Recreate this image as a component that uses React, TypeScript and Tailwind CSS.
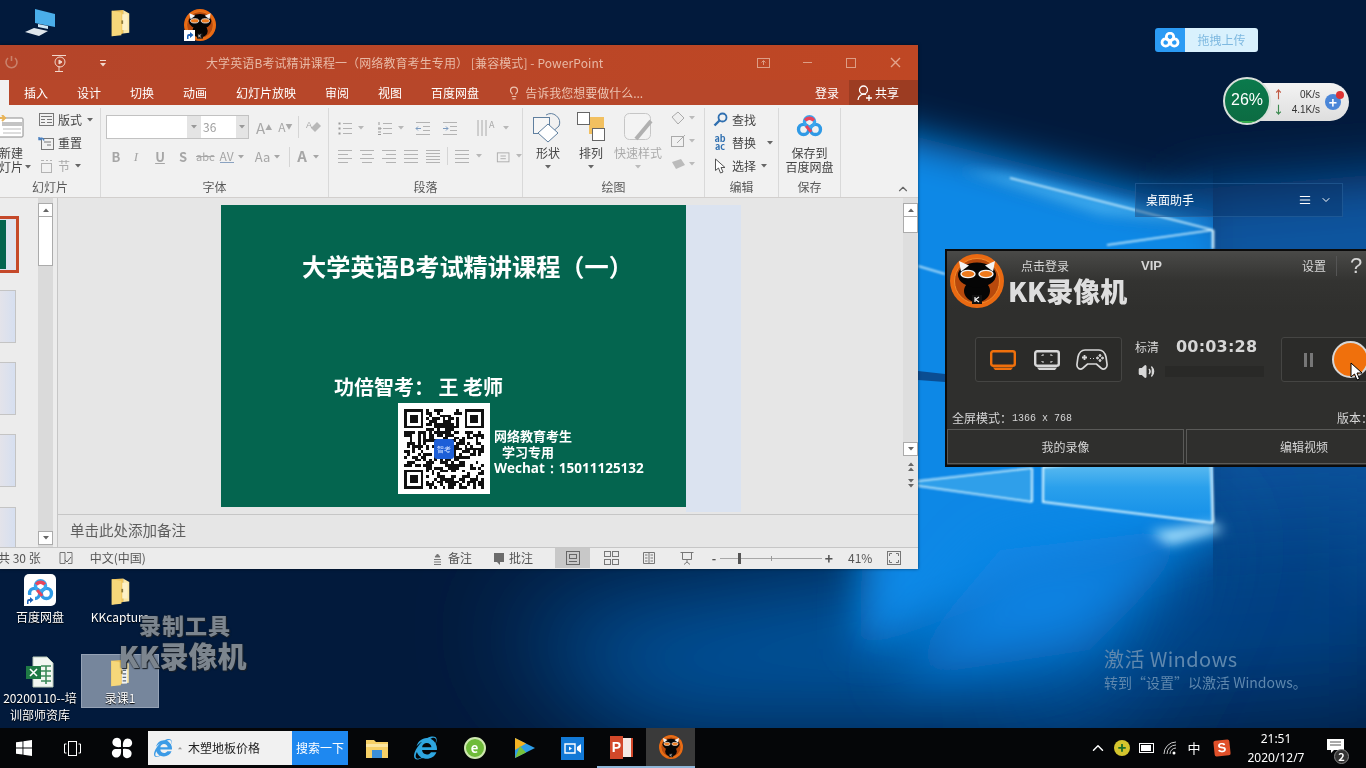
import { ReactNode } from "react";
import { FaInternetExplorer } from "react-icons/fa";
import { LuChevronDown, LuChevronUp, LuLightbulb, LuMenu, LuVolume2 } from "react-icons/lu";

function Wallpaper() {
  return (
    <svg className="absolute inset-0" width="1366" height="768" viewBox="0 0 1366 768">
      <defs>
        <filter id="b60" x="-50%" y="-50%" width="200%" height="200%"><feGaussianBlur stdDeviation="55" /></filter>
        <filter id="b30" x="-50%" y="-50%" width="200%" height="200%"><feGaussianBlur stdDeviation="28" /></filter>
        <filter id="b20" x="-50%" y="-50%" width="200%" height="200%"><feGaussianBlur stdDeviation="20" /></filter>
        <filter id="b8" x="-50%" y="-50%" width="200%" height="200%"><feGaussianBlur stdDeviation="6" /></filter>
        <filter id="b1" x="-50%" y="-50%" width="200%" height="200%"><feGaussianBlur stdDeviation="0.8" /></filter>
        <clipPath id="logoClip"><rect x="0" y="0" width="1213" height="768" /></clipPath>
        <linearGradient id="pane" x1="0" y1="0" x2="0" y2="1">
          <stop offset="0" stopColor="#74c8f2" />
          <stop offset="0.5" stopColor="#2aa0ec" />
          <stop offset="1" stopColor="#128ee8" />
        </linearGradient>
      </defs>
      <rect width="1366" height="768" fill="#021a3c" />
      <polygon points="1180,190 1430,170 1430,600 1180,620" fill="#07549f" filter="url(#b30)" />
      <polygon points="1100,520 1420,500 1420,700 1000,730" fill="#043f82" filter="url(#b60)" />
      <polygon points="500,620 1000,540 1213,520 1100,730 640,730" fill="#06559f" filter="url(#b60)" />
      <g clipPath="url(#logoClip)">
        <polygon points="870,125 1230,215 1230,528 1000,600 860,650" fill="#0a88e6" filter="url(#b20)" />
        <polygon points="1213,525 1000,550 890,680 1090,650" fill="#0a82e2" filter="url(#b30)" />
        <polygon points="1214,225 1010,175 960,170 1100,215" fill="#3ba8ee" filter="url(#b8)" />
      </g>
      <polygon points="1043,467 1210,452 1212,523 1043,502" fill="url(#pane)" />
      <polygon points="918,481 1031,468 1032,502 918,486" fill="#2f9fea" />
      <polygon points="1212,523 1150,532 1170,545 1225,530" fill="#9fdcfb" filter="url(#b8)" />
      <g stroke="#d8f4ff" fill="none" filter="url(#b1)">
        <path d="M1213 230V249M1211 452L1213 523" strokeWidth="2.5" />
        <path d="M1043 467L1211 452M1043 502L1213 523M1043 467V503M1032 468V502" strokeWidth="2" />
        <path d="M918 481L1032 468M918 486L1032 502" strokeWidth="1.6" />
        <path d="M1213 230L1107 245M1213 230L1010 178" strokeWidth="1.4" />
        <path d="M918 266L945 274" strokeWidth="1.5" />
      </g>
      <polygon points="918,371 945,374 945,382 918,380" fill="#0a4d92" />
    </svg>
  );
}

function KKLogo({ className }: { className: string }) {
  return (
    <svg className={className} viewBox="0 0 54 54">
      <circle cx="27" cy="27" r="27" fill="#ea6a12" />
      <circle cx="27" cy="27" r="22.5" fill="#b8490c" stroke="#f08a2c" strokeWidth="1" />
      <ellipse cx="27" cy="37" rx="13" ry="11" fill="#050505" />
      <ellipse cx="27" cy="21" rx="19" ry="12.5" fill="#050505" />
      <path d="M9 7L19 11.5L11 17.5Z" fill="#f4f4f4" />
      <path d="M45 7L35 11.5L43 17.5Z" fill="#f4f4f4" />
      <ellipse cx="18" cy="20" rx="7" ry="3.6" fill="#ef7a1c" stroke="#f4f4f4" strokeWidth="1.4" />
      <ellipse cx="36" cy="20" rx="7" ry="3.6" fill="#ef7a1c" stroke="#f4f4f4" strokeWidth="1.4" />
      <rect x="22" y="41" width="10" height="9" fill="#111" />
      <path d="M25 43V48M29 43L25.5 45.5L29 48" stroke="#f4f4f4" strokeWidth="1.2" fill="none" />
    </svg>
  );
}

function BaiduRings({ className }: { className: string }) {
  return (
    <svg className={className} viewBox="0 0 32 26" fill="none">
      <circle cx="9" cy="17" r="6" stroke="#2f9ae6" strokeWidth="4" />
      <circle cx="23" cy="17" r="6" stroke="#2f9ae6" strokeWidth="4" />
      <circle cx="16" cy="8" r="6" stroke="#3aa6ee" strokeWidth="4" />
      <path d="M11 6.5A6 6 0 0 1 21 6.5" stroke="#e8455c" strokeWidth="4" />
      <path d="M12 13L18 20" stroke="#e8455c" strokeWidth="3.5" />
    </svg>
  );
}

function FolderIcon({ className, stripe }: { className: string; stripe?: boolean }) {
  return (
    <svg className={className} viewBox="0 0 24 32">
      <path d="M2 2L15 1V28L2 31Z" fill="#f0c55c" />
      <path d="M15 1L22 5V27L15 28Z" fill="#fbe7a6" />
      <path d="M2 2L13 4V30L2 31Z" fill="#f6d77a" />
      <rect x="14" y="6" width="6" height={stripe ? 22 : 18} fill={stripe ? "#eef2f6" : "#fdf1c7"} />
      {stripe && <path d="M15 9H19M15 13H19M15 17H19M15 21H19M15 25H19" stroke="#5c6a78" strokeWidth="1.5" />}
      <rect x="13" y="13" width="2" height="4" fill="#8c7a3c" />
    </svg>
  );
}

function Caret({ className = "" }: { className?: string }) {
  return (
    <svg className={`shrink-0 ${className}`} width="6" height="4" viewBox="0 0 6 4">
      <path d="M0 0H6L3 3.5Z" fill="currentColor" />
    </svg>
  );
}

const qrCells: string = (() => {
  let d = "";
  let seed = 7;
  const inFinder = (x: number, y: number) => (x < 8 && y < 8) || (x > 20 && y < 8) || (x < 8 && y > 20);
  for (let y = 0; y < 29; y++) {
    for (let x = 0; x < 29; x++) {
      seed = (seed * 1103515245 + 12345) & 0x7fffffff;
      if (!inFinder(x, y) && (seed >> 16) % 100 < 52) d += `M${x} ${y}h1v1h-1z`;
    }
  }
  return d;
})();

function Finder({ x, y }: { x: number; y: number }) {
  return (
    <g>
      <rect x={x + 0.5} y={y + 0.5} width="6" height="6" fill="none" stroke="#111" />
      <rect x={x + 2} y={y + 2} width="3" height="3" fill="#111" />
    </g>
  );
}

// 段落 group icon: four text lines, optionally with bullets
function LinesIcon({ kind }: { kind: "left" | "center" | "right" | "full" | "dist" | "bullet" | "num" | "out" | "in" }) {
  const rows = kind === "dist" ? [2, 5, 8, 11, 14] : kind === "bullet" || kind === "num" ? [3, 8, 13] : [2, 6, 10, 14];
  const span = (i: number): [number, number] => {
    if (kind === "bullet" || kind === "num") return [6, 15];
    if (kind === "out" || kind === "in") return i === 0 || i === 3 ? [1, 15] : [8, 15];
    const short = i % 2 === 1;
    if (kind === "center") return short ? [3, 13] : [1, 15];
    if (kind === "right") return short ? [5, 15] : [1, 15];
    if (kind === "left") return short ? [1, 11] : [1, 15];
    return [1, 15];
  };
  return (
    <svg className="shrink-0" width="16" height="16" viewBox="0 0 16 16" stroke="#b3b3b3" fill="none">
      {rows.map((y, i) => (
        <path key={y} d={`M${span(i)[0]} ${y + 0.5}H${span(i)[1]}`} />
      ))}
      {kind === "bullet" && <path d="M1.5 3.5h2M1.5 8.5h2M1.5 13.5h2" strokeWidth="2" stroke="#999" />}
      {kind === "num" && <path d="M2 2v3M1 8h3v1H1M1 12h3M1 14.5h3" stroke="#999" />}
      {kind === "out" && <path d="M6 8.5H1M3 6.5L1 8.5L3 10.5" stroke="#7d9cc0" />}
      {kind === "in" && <path d="M1 8.5H6M4 6.5L6 8.5L4 10.5" stroke="#7d9cc0" />}
    </svg>
  );
}

function RibbonGroup({ className, label, children }: { className: string; label: string; children: ReactNode }) {
  return (
    <div className={`flex flex-col shrink-0 h-[89px] border-r border-[#d9d9d9] ${className}`}>
      <div className="flex-1 min-h-0">{children}</div>
      <div className="h-[20px] leading-[20px] text-center text-[12px] text-[#5a5a5a]">{label}</div>
    </div>
  );
}

function SideIconRow({ icon, text, dim, caret }: { icon: ReactNode; text: string; dim?: boolean; caret?: boolean }) {
  return (
    <div className={`flex items-center h-[23px] gap-[4px] text-[12px] ${dim ? "text-[#a8a8a8]" : "text-[#444]"}`}>
      <span className="w-[16px] h-[16px] flex items-center justify-center shrink-0">{icon}</span>
      <span>{text}</span>
      {caret && <Caret className="text-[#666] ml-[1px]" />}
    </div>
  );
}

function ScrollBtn({ up, className = "" }: { up?: boolean; className?: string }) {
  return (
    <div className={`w-[15px] h-[14px] bg-white border border-[#ababab] flex items-center justify-center text-[#666] shrink-0 ${className}`}>
      <Caret className={up ? "rotate-180" : ""} />
    </div>
  );
}

function Ribbon() {
  const fmt = "w-[16px] text-center text-[13px] font-bold text-[#a6a6a6]";
  return (
    <div className="flex h-[93px] bg-[#f1f1f1] border-b border-[#d2cfcd] pt-[3px] relative">
      <RibbonGroup className="w-[101px] overflow-hidden" label="幻灯片">
        <div className="flex">
          <div className="w-[34px] shrink-0 pt-[7px] flex flex-col text-[12px] leading-[14px] text-[#444]">
            <svg className="mb-[8px]" width="24" height="23" viewBox="0 0 24 23">
              <rect x="-2" y="3" width="25" height="19" rx="1" fill="#fff" stroke="#8c8c8c" />
              <rect x="2" y="7" width="20" height="4" fill="#c4c4c4" />
              <path d="M3 14H21M3 18H21" stroke="#bbb" />
              <path d="M2 0L5 3L2 6M0 3H6" stroke="#e8b45a" strokeWidth="2" fill="none" />
            </svg>
            <span className="-ml-[1px]">新建</span>
            <span className="flex items-center gap-[2px] -ml-[1px] whitespace-nowrap">灯片<Caret className="text-[#666]" /></span>
          </div>
          <div className="pl-[4px] flex flex-col">
            <SideIconRow caret text="版式" icon={<svg width="15" height="13" viewBox="0 0 15 13" fill="none" stroke="#777"><rect x=".5" y=".5" width="14" height="12" /><path d="M2 3.5H13M2 6.5H6M2 9.5H6M8 6.5H13M8 9.5H13" /></svg>} />
            <SideIconRow text="重置" icon={<svg width="16" height="14" viewBox="0 0 16 14" fill="none" stroke="#777"><rect x="3.5" y="2.5" width="12" height="11" /><path d="M6 6H13M9 9H13" /><path d="M6 4.5A3 3 0 0 0 1 3M1 1V3.5H3.5" stroke="#4a80c0" strokeWidth="1.4" /></svg>} />
            <SideIconRow dim caret text="节" icon={<svg width="13" height="14" viewBox="0 0 13 14" fill="none" stroke="#b3b3b3"><rect x="1.5" y="4.5" width="10" height="9" /><path d="M1 1.5H4M6 1.5H8M10 1.5H12" /></svg>} />
          </div>
        </div>
      </RibbonGroup>

      <RibbonGroup className="w-[228px]" label="字体">
        <div className="flex items-center pl-[5px] pt-[7px]">
          <div className="flex h-[24px] border border-[#c2c2c2] bg-white">
            <div className="w-[80px]" />
            <div className="w-[14px] bg-[#e4e4e4] flex items-center justify-center text-[#999]"><Caret /></div>
            <div className="w-[35px] pl-[2px] text-[12px] leading-[22px] text-[#a0a0a0]">36</div>
            <div className="w-[12px] bg-[#e4e4e4] flex items-center justify-center text-[#999]"><Caret /></div>
          </div>
          <span className="ml-[7px] text-[15px] leading-none text-[#a9a9a9]">A<sup className="text-[7px]">▲</sup></span>
          <span className="ml-[6px] text-[12px] leading-none text-[#a9a9a9]">A<sup className="text-[7px]">▼</sup></span>
          <div className="ml-[6px] w-px h-[22px] bg-[#d5d5d5]" />
          <svg className="ml-[7px]" width="16" height="16" viewBox="0 0 16 16"><path d="M9 13L15 7L11 3L5 9Z" fill="#b8b8b8" /><text x="0" y="9" fontSize="9" fill="#a9a9a9" fontFamily="Liberation Sans">A</text></svg>
        </div>
        <div className="flex items-center pl-[7px] pt-[5px] h-[30px] text-[#a6a6a6]">
          <span className={fmt}>B</span>
          <span className={`${fmt} ml-[4px] italic font-normal font-['Liberation_Serif',serif]`}>I</span>
          <span className={`${fmt} ml-[8px] underline`}>U</span>
          <span className={`${fmt} ml-[7px]`}>S</span>
          <span className="ml-[5px] text-[11px] line-through">abc</span>
          <span className="ml-[5px] text-[12px] leading-[12px] border-b border-[#8aa2c0]">AV</span>
          <Caret className="ml-[4px]" />
          <span className="ml-[11px] text-[13px]">Aa</span>
          <Caret className="ml-[4px]" />
          <div className="ml-[9px] w-px h-[20px] bg-[#d5d5d5]" />
          <span className="ml-[7px] text-[15px] font-bold">A</span>
          <Caret className="ml-[6px]" />
        </div>
      </RibbonGroup>

      <RibbonGroup className="w-[194px]" label="段落">
        <div className="flex items-center pl-[8px] pt-[11px] gap-[5px] text-[#b8b8b8]">
          <LinesIcon kind="bullet" /><Caret />
          <span className="w-[3px]" />
          <LinesIcon kind="num" /><Caret />
          <span className="w-[1px]" />
          <LinesIcon kind="out" /><span className="w-[1px]" /><LinesIcon kind="in" />
          <span className="w-[8px]" />
          <svg width="22" height="18" viewBox="0 0 22 18" fill="none" stroke="#aaa"><path d="M2 1V17M6 1V17M10 1V17" /><text x="13" y="9" fontSize="9" fill="#aaa" stroke="none">A</text></svg>
          <Caret />
        </div>
        <div className="flex items-center pl-[8px] pt-[10px] gap-[6px] text-[#b8b8b8]">
          <LinesIcon kind="left" /><LinesIcon kind="center" /><LinesIcon kind="right" /><LinesIcon kind="full" /><LinesIcon kind="dist" />
          <span className="w-[1px] h-[18px] bg-[#d5d5d5]" />
          <LinesIcon kind="full" /><Caret />
          <span className="w-[2px]" />
          <svg width="16" height="16" viewBox="0 0 16 16" fill="none" stroke="#aaa"><rect x="1.5" y="4.5" width="13" height="10" /><path d="M5 8H11M5 11H11" /></svg>
          <Caret />
        </div>
      </RibbonGroup>

      <RibbonGroup className="w-[182px]" label="绘图">
        <div className="flex text-[12px] text-[#444] pt-[4px]">
          <div className="w-[50px] flex flex-col items-center">
            <svg width="32" height="31" viewBox="0 0 32 31" fill="none" stroke="#5f7f9f">
              <path d="M14 3A9 9 0 0 1 27 14L18 22" />
              <rect x="1.5" y="5.5" width="16" height="16" fill="#f6f6f6" />
              <path d="M16 12L26 21L16 30L6 21Z" fill="#fff" />
            </svg>
            <span className="leading-[14px] mt-[3px]">形状</span>
            <Caret className="text-[#666] mt-[5px]" />
          </div>
          <div className="w-[40px] -ml-[2px] flex flex-col items-center">
            <svg width="28" height="31" viewBox="0 0 28 31">
              <rect x="12" y="5" width="15" height="17" fill="#f2c060" />
              <rect x=".5" y=".5" width="12" height="12" fill="#fff" stroke="#666" />
              <rect x="15.5" y="16.5" width="12" height="12" fill="#fff" stroke="#666" />
            </svg>
            <span className="leading-[14px] mt-[3px]">排列</span>
            <Caret className="text-[#666] mt-[5px]" />
          </div>
          <div className="w-[54px] flex flex-col items-center text-[#aaa] whitespace-nowrap">
            <svg width="30" height="31" viewBox="0 0 30 31" fill="none">
              <rect x="1.5" y="1.5" width="26" height="26" rx="5" fill="#f3f3f3" stroke="#c6c6c6" />
              <path d="M28 9L13 27" stroke="#b0b0b0" strokeWidth="4" />
            </svg>
            <span className="leading-[14px] mt-[3px]">快速样式</span>
            <Caret className="text-[#bbb] mt-[5px]" />
          </div>
          <div className="flex flex-col ml-[6px] gap-[6px] text-[#bbb] -mt-[3px]">
            <span className="flex items-center gap-[3px] h-[17px]"><svg width="15" height="14" viewBox="0 0 15 14"><path d="M1 6L7 1L13 7L7 13Z" fill="#eee" stroke="#aaa" /></svg><Caret /></span>
            <span className="flex items-center gap-[3px] h-[17px]"><svg width="15" height="14" viewBox="0 0 15 14" fill="none" stroke="#aaa"><rect x=".5" y="2.5" width="12" height="10" /><path d="M6 9L14 1" /></svg><Caret /></span>
            <span className="flex items-center gap-[3px] h-[17px]"><svg width="15" height="14" viewBox="0 0 15 14"><path d="M1 5L10 2L14 8L5 12Z" fill="#bbb" /></svg><Caret /></span>
          </div>
        </div>
      </RibbonGroup>

      <RibbonGroup className="w-[74px] overflow-hidden" label="编辑">
        <div className="flex flex-col pl-[7px]">
          <SideIconRow text="查找" icon={<svg width="15" height="15" viewBox="0 0 15 15" fill="none" stroke="#2f6fb0" strokeWidth="1.8"><circle cx="9.5" cy="5.5" r="4" /><path d="M6.5 8.5L1.5 13.5" strokeWidth="2.4" /></svg>} />
          <div className="flex items-center">
            <SideIconRow text="替换" icon={<span className="text-[9px] leading-[8px] text-[#2f6fb0] font-bold text-center">ab<br />ac</span>} />
            <Caret className="ml-[11px] text-[#666]" />
          </div>
          <SideIconRow caret text="选择" icon={<svg width="12" height="16" viewBox="0 0 12 16" fill="#fff" stroke="#555"><path d="M1.5 1V12.5L4.5 10L6.5 15L9 14L7 9.5H11Z" /></svg>} />
        </div>
      </RibbonGroup>

      <RibbonGroup className="w-[62px]" label="保存">
        <div className="flex flex-col items-center pt-[7px] text-[12px] leading-[14px] text-[#444] whitespace-nowrap">
          <BaiduRings className="w-[27px] h-[22px] mb-[9px]" />
          <span>保存到</span>
          <span>百度网盘</span>
        </div>
      </RibbonGroup>

      <LuChevronUp className="absolute right-[8px] bottom-[1px] w-[14px] h-[14px] text-[#666]" />
    </div>
  );
}

function SlideCanvas() {
  return (
    <div className="w-[465px] h-[302px] bg-[#04654f] flex flex-col text-white font-bold shrink-0">
      <div className="mt-[43px] ml-[81px] h-[36px] leading-[36px] text-[24.2px] whitespace-nowrap">大学英语B考试精讲课程（一）</div>
      <div className="mt-[90px] ml-[113px] h-[26px] leading-[26px] text-[20px] whitespace-nowrap">功倍智考： 王 老师</div>
      <div className="flex mt-[3px] ml-[177px]">
        <div className="w-[92px] h-[91px] bg-white flex items-center justify-center relative">
          <svg width="80" height="80" viewBox="0 0 29 29" shapeRendering="crispEdges">
            <path d={qrCells} fill="#111" />
            <Finder x={0} y={0} />
            <Finder x={22} y={0} />
            <Finder x={0} y={22} />
          </svg>
          <div className="absolute w-[20px] h-[20px] rounded-[3px] bg-[#1d5fd8] text-[7px] leading-[20px] text-center text-[#cfe0ff] font-normal whitespace-nowrap">智考</div>
        </div>
        <div className="ml-[4px] pt-[25px] flex flex-col text-[13px] leading-[16px] whitespace-nowrap">
          <span>网络教育考生</span>
          <span className="ml-[8px]">学习专用</span>
          <span className="font-['Open_Sans',sans-serif] text-[13.5px]">Wechat：15011125132</span>
        </div>
      </div>
    </div>
  );
}

function MainArea() {
  const thumb = "w-[16px] h-[53px] shrink-0 border border-[#c4c4c4] border-l-0 bg-gradient-to-r from-[#e3e3ea] to-[#d6dff0]";
  return (
    <div className="flex flex-1 min-h-0 bg-[#e6e6e6]">
      <div className="w-[58px] shrink-0 flex border-r border-[#c6c6c6] bg-[#ececec]">
        <div className="w-[38px] shrink-0 h-[349px] overflow-hidden flex flex-col pt-[18px]">
          <div className="w-[19px] h-[57px] shrink-0 border-[3px] border-l-0 border-[#c5492a] bg-[#dfe3ee] flex">
            <div className="w-[6px] my-[1px] bg-[#04654f]" />
          </div>
          <div className={`${thumb} mt-[17px]`} />
          <div className={`${thumb} mt-[19px]`} />
          <div className={`${thumb} mt-[19px]`} />
          <div className={`${thumb} mt-[20px]`} />
        </div>
        <div className="w-[15px] shrink-0 flex flex-col pt-[5px] pb-[2px] bg-[#dadada]">
          <ScrollBtn up />
          <div className="h-[49px] bg-white border border-t-0 border-[#ababab] shrink-0" />
          <div className="flex-1" />
          <ScrollBtn />
        </div>
      </div>
      <div className="flex-1 flex flex-col min-w-0">
        <div className="h-[316px] flex shrink-0">
          <div className="ml-[163px] mt-[7px] flex items-start">
            <SlideCanvas />
            <div className="w-[55px] h-[307px] bg-[#dbe3f0]" />
          </div>
          <div className="ml-auto w-[15px] flex flex-col pt-[5px] text-[#666] shrink-0 bg-[#dedede]">
            <ScrollBtn up />
            <div className="h-[16px] bg-white border border-t-0 border-[#ababab] shrink-0" />
            <div className="flex-1" />
            <ScrollBtn />
            <div className="h-[58px] bg-[#e6e6e6] flex flex-col items-center pt-[6px] shrink-0">
              <Caret className="rotate-180" /><Caret className="rotate-180 mt-[1px]" />
              <div className="h-[8px]" />
              <Caret /><Caret className="mt-[1px]" />
            </div>
          </div>
        </div>
        <div className="h-[33px] border-t border-[#c6c6c6] pl-[12px] text-[14.5px] leading-[30px] text-[#5e5e5e]">单击此处添加备注</div>
      </div>
    </div>
  );
}

function StatusBar() {
  const view = "h-full flex items-center justify-center shrink-0";
  return (
    <div className="h-[22px] flex items-center bg-[#ececec] border-t border-[#c6c6c6] text-[12px] text-[#555] shrink-0 pb-px">
      <span className="-ml-[2px] whitespace-nowrap">共 30 张</span>
      <svg className="ml-[18px]" width="14" height="14" viewBox="0 0 14 14" fill="none" stroke="#777"><path d="M1 1.5H6V12.5H1ZM8 1.5H13V12.5H9" /><path d="M6 9L8 11L12 6" stroke="#5a5a5a" /></svg>
      <span className="ml-[17px] whitespace-nowrap">中文(中国)</span>
      <div className="ml-auto flex items-center h-full">
        <div className="w-[41px] flex items-center gap-[6px]"><svg width="9" height="13" viewBox="0 0 9 13" fill="none" stroke="#777"><path d="M1 7.5H8M1 10H8M1 12.5H8" /><path d="M2 5L4.5 2L7 5Z" fill="#777" /></svg>备注</div>
        <div className="w-[41px] ml-[20px] flex items-center gap-[5px]"><svg width="10" height="13" viewBox="0 0 10 13"><path d="M0 1H10V10H6V13L3 10H0Z" fill="#6b6b6b" /></svg>批注</div>
        <div className={`${view} w-[35px] ml-[20px] bg-[#c8c8c8]`}><svg width="14" height="14" viewBox="0 0 14 14" fill="none" stroke="#666"><rect x=".5" y=".5" width="13" height="13" /><rect x="3.5" y="3.5" width="7" height="4" /><path d="M3 10.5H11" /></svg></div>
        <div className={`${view} w-[42px]`}><svg width="15" height="14" viewBox="0 0 15 14" fill="none" stroke="#777"><rect x=".5" y=".5" width="6" height="5" /><rect x="8.5" y=".5" width="6" height="5" /><rect x=".5" y="8.5" width="6" height="5" /><rect x="8.5" y="8.5" width="6" height="5" /></svg></div>
        <div className={`${view} w-[34px]`}><svg width="14" height="14" viewBox="0 0 14 14" fill="none" stroke="#777"><path d="M7 1.5H1.5V12.5H7V1.5H12.5V12.5H7M3 4H5.5M3 7H5.5M3 10H5.5M8.5 4H11M8.5 7H11M8.5 10H11" /></svg></div>
        <div className={`${view} w-[42px]`}><svg width="14" height="14" viewBox="0 0 14 14" fill="none" stroke="#777"><path d="M.5 1.5H13.5M2.5 1.5V8.5H11.5V1.5M7 8.5V11M4 13.5L7 11L10 13.5" /></svg></div>
        <div className={`${view} w-[12px] font-bold`}>-</div>
        <div className="w-[102px] h-full flex items-center relative shrink-0">
          <div className="w-full h-px bg-[#a8a8a8]" />
          <div className="absolute left-[18px] w-[3px] h-[11px] bg-[#555]" />
          <div className="absolute left-[51px] w-px h-[5px] bg-[#999]" />
        </div>
        <div className={`${view} w-[14px] font-bold text-[14px]`}>+</div>
        <div className="ml-[12px] w-[25px] shrink-0">41%</div>
        <div className={`${view} w-[16px] ml-[13px] mr-[16px]`}><svg width="14" height="14" viewBox="0 0 14 14" fill="none" stroke="#777"><rect x=".5" y=".5" width="13" height="13" /><path d="M2.5 5V2.5H5M9 2.5H11.5V5M11.5 9V11.5H9M5 11.5H2.5V9" /></svg></div>
      </div>
    </div>
  );
}

function PowerPointWindow() {
  const winIcon = "w-[44px] flex items-center justify-center shrink-0";
  return (
    <div className="absolute left-0 top-[45px] w-[918px] h-[524px] flex flex-col shadow-[0_0_3px_rgba(0,0,0,.5)]">
      <div className="h-[35px] flex items-center shrink-0 bg-gradient-to-r from-[#b4452a] to-[#bf4724] text-[12px] tracking-[0.1px] text-[#e8b9a6]">
        <svg className="ml-[4px]" width="15" height="15" viewBox="0 0 15 15" fill="none" stroke="#c9826c" strokeWidth="1.6"><path d="M4 3A5.5 5.5 0 1 0 11 3M7.5 1V6" /></svg>
        <svg className="ml-[32px]" width="16" height="20" viewBox="0 0 16 20" fill="none" stroke="#f2d8cc"><path d="M1 2.5H15M8 13V18M4 18.5H12" /><circle cx="9" cy="9" r="5" /><path d="M8 7V11L11 9Z" fill="#f2d8cc" /></svg>
        <svg className="ml-[32px]" width="8" height="8" viewBox="0 0 8 8" fill="#f2d8cc"><path d="M1 1H7V2H1ZM1 4H7L4 7.5Z" /></svg>
        <span className="ml-[99px] whitespace-nowrap">大学英语B考试精讲课程一（网络教育考生专用） [兼容模式] - PowerPoint</span>
        <div className="ml-auto flex h-full">
          <div className={winIcon}><svg width="13" height="10" viewBox="0 0 13 10" fill="none" stroke="#dd9e86"><rect x=".5" y=".5" width="12" height="9" /><path d="M6.5 7V3M4.5 4.5L6.5 2.5L8.5 4.5" /></svg></div>
          <div className={winIcon}><div className="w-[9px] h-px bg-[#dd9e86]" /></div>
          <div className={winIcon}><div className="w-[10px] h-[10px] border border-[#dd9e86]" /></div>
          <div className={`${winIcon} mr-px text-[#e3a48c]`}><svg width="11" height="11" viewBox="0 0 11 11" stroke="currentColor" strokeWidth="1.4"><path d="M1 1L10 10M10 1L1 10" /></svg></div>
        </div>
      </div>
      <div className="h-[25px] flex items-center shrink-0 bg-[#b7472a] text-[12px] text-white">
        <div className="w-[9px] h-full bg-[#f1f1f1] shrink-0" />
        <div className="ml-[15px] flex gap-[29px] whitespace-nowrap">
          <span>插入</span><span>设计</span><span>切换</span><span>动画</span><span>幻灯片放映</span><span>审阅</span><span>视图</span><span>百度网盘</span>
        </div>
        <LuLightbulb className="ml-[28px] w-[14px] h-[14px] text-[#edc4b2]" />
        <span className="ml-[4px] text-[#edc4b2] whitespace-nowrap">告诉我您想要做什么...</span>
        <span className="ml-auto">登录</span>
        <div className="ml-[10px] w-[69px] h-full bg-[#9c3c22] flex items-center pl-[8px] gap-[3px]">
          <svg width="15" height="16" viewBox="0 0 15 16" fill="none" stroke="#fff" strokeWidth="1.3"><circle cx="6.5" cy="5" r="4" /><path d="M1 15A6 6 0 0 1 9 9.5M9 13H15M12 10V16" /></svg>
          共享
        </div>
      </div>
      <Ribbon />
      <MainArea />
      <StatusBar />
    </div>
  );
}

function KKWindow() {
  return (
    <div className="absolute left-[945px] top-[249px] w-[425px] h-[218px] flex flex-col bg-[#2f2f2d] border-2 border-[#0b0b0b] text-[#d6d6d6] text-[12px] overflow-hidden">
      <div className="h-[60px] shrink-0 flex bg-gradient-to-b from-[#4a4a48] via-[#333331] to-[#2f2f2d]">
        <KKLogo className="w-[54px] h-[54px] ml-[3px] mt-[3px] shrink-0" />
        <div className="flex flex-col ml-[4px] flex-1 min-w-0">
          <div className="flex items-center h-[28px] pt-[2px]">
            <span className="ml-[13px] w-[120px] shrink-0">点击登录</span>
            <span className="font-bold text-[13px] font-['Liberation_Sans',sans-serif]">VIP</span>
            <span className="ml-[140px]">设置</span>
            <div className="ml-[10px] w-px h-[20px] bg-[#555]" />
            <span className="ml-[13px] text-[22px] leading-none font-['Liberation_Sans',sans-serif]">?</span>
          </div>
          <div className="-mt-[2px] text-[27px] leading-[28px] font-black text-[#dedede] whitespace-nowrap">KK录像机</div>
        </div>
      </div>
      <div className="flex items-start mt-[26px] ml-[28px] shrink-0">
        <div className="w-[147px] h-[45px] flex items-center border border-[#454543] rounded-[3px] bg-[#2b2b29] shrink-0">
          <svg className="ml-[14px]" width="26" height="20" viewBox="0 0 26 20" fill="none"><rect x="1.2" y="1.2" width="23.6" height="14.6" rx="2" stroke="#f0700c" strokeWidth="2.4" /><path d="M5 20H21L23 17.5H3Z" fill="#f0700c" /></svg>
          <svg className="ml-[18px]" width="26" height="20" viewBox="0 0 26 20" fill="none"><rect x="1.2" y="1.2" width="23.6" height="14.6" rx="2" stroke="#d8d8d8" strokeWidth="2.4" /><path d="M5 20H21L23 17.5H3Z" fill="#d8d8d8" /><path d="M8 6V5H10M16 5H18V6M18 11V12H16M10 12H8V11" stroke="#d8d8d8" /></svg>
          <svg className="ml-[16px]" width="32" height="23" viewBox="0 0 32 23" fill="none" stroke="#d8d8d8">
            <path d="M9 2H23C27 2 29 5 30 9L31 16C31.5 20 28 22.5 25 20L20.5 16H11.5L7 20C4 22.5 .5 20 1 16L2 9C3 5 5 2 9 2Z" strokeWidth="1.7" />
            <path d="M6 9.5H11M8.5 7V12" strokeWidth="1.8" />
            <path d="M14 10.5H15M17 10.5H18" />
            <circle cx="24" cy="7.5" r="1" fill="#d8d8d8" /><circle cx="24" cy="12.5" r="1" fill="#d8d8d8" /><circle cx="21.5" cy="10" r="1" fill="#d8d8d8" /><circle cx="26.5" cy="10" r="1" fill="#d8d8d8" />
          </svg>
        </div>
        <div className="flex flex-col ml-[13px] w-[130px] shrink-0">
          <div className="flex items-center h-[20px]">
            <span>标清</span>
            <span className="ml-[17px] font-bold text-[16px] tracking-[0.2px] font-['DejaVu_Sans',sans-serif] whitespace-nowrap">00:03:28</span>
          </div>
          <div className="flex items-center mt-[6px]">
            <LuVolume2 className="w-[17px] h-[17px] ml-[3px] text-[#d8d8d8] fill-[#d8d8d8]" />
            <div className="ml-[10px] w-[99px] h-[11px] bg-[#292927]" />
          </div>
        </div>
        <div className="w-[120px] h-[45px] ml-[16px] flex items-center border border-[#454543] rounded-[3px] bg-[#2b2b29] shrink-0 relative">
          <div className="ml-[22px] w-[3px] h-[14px] bg-[#777]" />
          <div className="ml-[3px] w-[3px] h-[14px] bg-[#777]" />
          <div className="ml-[19px] w-[37px] h-[37px] rounded-full bg-[#f0700c] border-2 border-[#d6d6d6] shrink-0" />
          <svg className="absolute left-[68px] top-[24px]" width="13" height="19" viewBox="0 0 13 19"><path d="M1 1V15L4.5 12L7 18L9.5 17L7 11H12Z" fill="#fff" stroke="#000" /></svg>
        </div>
      </div>
      <div className="flex items-center mt-[26px] ml-[5px] h-[20px] shrink-0 whitespace-nowrap">
        <span>全屏模式：</span>
        <span className="font-['Liberation_Mono',monospace] text-[10px]">1366 x 768</span>
        <span className="ml-[265px]">版本：</span>
      </div>
      <div className="flex flex-1 mb-[1px] gap-[2px] min-h-0 pt-[1px]">
        <div className="w-[237px] border border-[#5a5a58] flex items-center justify-center shrink-0">我的录像</div>
        <div className="w-[236px] border border-[#5a5a58] flex items-center justify-center shrink-0">编辑视频</div>
      </div>
    </div>
  );
}

function DesktopIcon({ className, icon, label }: { className: string; icon: ReactNode; label: ReactNode }) {
  return (
    <div className={`absolute flex flex-col items-center text-white text-[12px] leading-[17px] text-center [text-shadow:0_1px_1px_#000] ${className}`}>
      {icon}
      <div className="whitespace-nowrap">{label}</div>
    </div>
  );
}

function ShortcutArrow({ className }: { className: string }) {
  return (
    <svg className={`absolute ${className}`} width="11" height="11" viewBox="0 0 11 11">
      <rect width="11" height="11" fill="#fff" />
      <path d="M3 9V6Q3 4 5 4H6V2L9.5 5L6 8V6H5Q4.5 6 4.5 7V9Z" fill="#1c62b8" />
    </svg>
  );
}

function DesktopIcons() {
  return (
    <>
      <DesktopIcon className="left-[10px] top-[8px] w-[60px]" label="此电脑" icon={
        <svg className="h-[28px] mb-[6px]" width="32" height="28" viewBox="0 0 32 28"><path d="M11 1L31 6V19L11 15Z" fill="#4aaeea" /><path d="M14 16V19L24 21V18Z" fill="#cfe6f4" /><path d="M1 24L10 20L24 23L15 28Z" fill="#dfe6ec" /></svg>
      } />
      <DesktopIcon className="left-[90px] top-[9px] w-[60px]" label="我的文档" icon={<div className="mb-[5px] h-[28px] flex"><FolderIcon className="w-[21px] h-[28px]" /></div>} />
      <DesktopIcon className="left-[170px] top-[9px] w-[60px]" label="录像机" icon={
        <div className="relative w-[32px] h-[30px] mb-[3px]"><KKLogo className="w-[32px] h-[32px]" /><ShortcutArrow className="left-0 bottom-[-2px]" /></div>
      } />

      <DesktopIcon className="left-[10px] top-[574px] w-[60px]" label="百度网盘" icon={
        <div className="relative w-[32px] h-[32px] rounded-[5px] bg-white flex items-center justify-center mb-[2px]"><BaiduRings className="w-[27px] h-[24px]" /><ShortcutArrow className="left-0 bottom-0" /></div>
      } />
      <DesktopIcon className="left-[90px] top-[577px] w-[60px]" label="KKcapture" icon={<FolderIcon className="w-[21px] h-[29px] mb-[2px]" />} />
      <DesktopIcon className="left-0 top-[656px] w-[80px]" label={<>20200110--培<br />训部师资库</>} icon={
        <svg className="mb-[1px]" width="28" height="32" viewBox="0 0 28 32">
          <path d="M7 1H21L27 7V31H7Z" fill="#f2f7f2" stroke="#b9c9b9" />
          <path d="M15 10H25M15 15H25M15 20H25M15 25H25M20 10V28" stroke="#3c8a5a" strokeWidth="1.6" />
          <rect x="0" y="10" width="15" height="13" fill="#1f7a45" />
          <path d="M4 13L11 20M11 13L4 20" stroke="#fff" strokeWidth="1.6" />
        </svg>
      } />
      <div className="absolute left-[81px] top-[654px] w-[78px] h-[54px] bg-[#c5cfdc]/60 border border-[#dfe6ee]/30 flex flex-col items-center pt-[4px] text-white text-[12px] leading-[17px] [text-shadow:0_1px_1px_#000]">
        <FolderIcon stripe className="w-[22px] h-[28px] mb-[2px]" />
        <span>录课1</span>
      </div>
      <div className="absolute left-[115px] top-[609px] w-[135px] flex flex-col items-center font-black text-[#7c858e] [text-shadow:0_0_2px_#1b2128,1px_1px_1px_#1b2128] whitespace-nowrap">
        <span className="text-[22px] leading-[30px] tracking-[1px] ml-[5px]">录制工具</span>
        <span className="text-[29px] leading-[32px]">KK录像机</span>
      </div>
    </>
  );
}

function TopWidgets() {
  return (
    <>
      <div className="absolute left-[1155px] top-[28px] w-[103px] h-[24px] flex rounded-[3px] overflow-hidden">
        <div className="w-[30px] bg-[#2b9bf4] flex items-center justify-center">
          <svg width="20" height="16" viewBox="0 0 32 26" fill="none" stroke="#fff" strokeWidth="4.5"><circle cx="9" cy="17" r="6" /><circle cx="23" cy="17" r="6" /><circle cx="16" cy="8" r="6" /></svg>
        </div>
        <div className="flex-1 bg-[#d9f1fd] text-[12px] leading-[24px] text-center text-[#7eb9e0]">拖拽上传</div>
      </div>

      <div className="absolute left-[1246px] top-[83px] w-[103px] h-[38px] rounded-r-[19px] bg-gradient-to-b from-[#f3f3f3] to-[#dedede] flex items-center text-[#333] text-[10px] leading-[15px] pl-[27px]">
        <div className="flex flex-col font-bold text-[11px]"><span className="text-[#c05a44]">↑</span><span className="text-[#3c8a50]">↓</span></div>
        <div className="flex flex-col items-end w-[44px] -ml-[8px] mr-[5px] font-['Liberation_Sans',sans-serif]"><span>0K/s</span><span>4.1K/s</span></div>
        <div className="relative w-[16px] h-[16px] rounded-full bg-[#4a86d8] text-white text-[14px] font-bold leading-[16px] text-center">+
          <div className="absolute -right-[3px] -top-[3px] w-[8px] h-[8px] rounded-full bg-[#dd3333]" />
        </div>
      </div>
      <div className="absolute left-[1223px] top-[77px] w-[48px] h-[48px] rounded-full border-2 border-[#d8e0da] overflow-hidden bg-gradient-to-b from-[#0a7a4c] to-[#0c6b42] flex flex-col">
        <div className="flex-1 text-white text-[16px] leading-[42px] text-center whitespace-nowrap font-['Liberation_Sans',sans-serif]">26%</div>
        <div className="h-[12px] bg-[#35b04c] shrink-0" />
      </div>

      <div className="absolute left-[1135px] top-[183px] w-[208px] h-[34px] border border-[#2f6ba5]/50 bg-[#0a3468]/40 flex items-center text-white text-[12px] pl-[10px] pb-[1px]">
        <span>桌面助手</span>
        <LuMenu className="ml-auto w-[14px] h-[14px]" />
        <LuChevronDown className="ml-[8px] mr-[10px] w-[12px] h-[12px]" />
      </div>

      <div className="absolute left-[1104px] top-[645px] flex flex-col text-[#5f88ae] whitespace-nowrap">
        <span className="text-[20px] leading-[28px] tracking-[0.4px]">激活 Windows</span>
        <span className="text-[14px] leading-[19px]">转到“设置”以激活 Windows。</span>
      </div>
    </>
  );
}

function TaskIcon({ children, className = "" }: { children: ReactNode; className?: string }) {
  return <div className={`w-[49px] h-full flex items-center justify-center shrink-0 ${className}`}>{children}</div>;
}

function Taskbar() {
  const tray = "w-[24px] flex items-center justify-center shrink-0";
  return (
    <div className="h-[40px] shrink-0 flex items-center bg-[#050608] relative text-white">
      <div className="w-[48px] flex items-center justify-center shrink-0">
        <svg width="16" height="16" viewBox="0 0 16 16" fill="#fff"><path d="M0 2.3L6.5 1.4V7.5H0ZM7.4 1.3L16 0V7.5H7.4ZM0 8.4H6.5V14.6L0 13.7ZM7.4 8.4H16V16L7.4 14.8Z" /></svg>
      </div>
      <div className="w-[48px] flex items-center justify-center shrink-0">
        <svg width="17" height="15" viewBox="0 0 17 15" fill="none" stroke="#fff"><rect x="4.5" y=".5" width="8" height="14" /><path d="M2.5 3H.5V12H2.5M14.5 3H16.5V12H14.5" /></svg>
      </div>
      <div className="w-[52px] flex items-center justify-center shrink-0">
        <svg width="22" height="22" viewBox="0 0 22 22" fill="#fff">
          <path d="M10 10C3 11 0 7 2 3C4 0 9 0 10 4Z" />
          <path d="M12 10C11 3 15 0 19 2C22 4 22 9 18 10Z" />
          <path d="M12 12C19 11 22 15 20 19C18 22 13 22 12 18Z" />
          <path d="M10 12C11 19 7 22 3 20C0 18 0 13 4 12Z" />
        </svg>
      </div>
      <div className="w-[200px] h-[34px] flex shrink-0">
        <div className="flex-1 bg-[#f1f1f1] flex items-center pl-[6px] text-[#222] text-[12px] min-w-0">
          <FaInternetExplorer className="w-[18px] h-[20px] text-[#3c9be6] shrink-0" />
          <Caret className="text-[#999] rotate-180 mx-[5px] scale-75" />
          <span className="whitespace-nowrap">木塑地板价格</span>
        </div>
        <div className="w-[56px] bg-[#1e88f0] text-[12px] leading-[34px] text-center text-white whitespace-nowrap">搜索一下</div>
      </div>
      <div className="w-[4px] shrink-0" />
      <TaskIcon>
        <svg width="22" height="20" viewBox="0 0 22 20"><path d="M0 2H8L10 4H22V20H0Z" fill="#f6d067" /><rect x="6" y="12" width="10" height="8" fill="#3c8fd8" /><rect x="0" y="6" width="22" height="3" fill="#fbe6a2" /></svg>
      </TaskIcon>
      <TaskIcon><FaInternetExplorer className="w-[23px] h-[24px] text-[#2ea6e0]" /></TaskIcon>
      <TaskIcon>
        <div className="w-[22px] h-[22px] rounded-full bg-[#6fbb3a] border-2 border-[#cfe8b0] text-white text-[13px] font-bold leading-[18px] text-center">e</div>
      </TaskIcon>
      <TaskIcon>
        <svg width="24" height="24" viewBox="0 0 24 24"><path d="M3 2L23 12L3 22Z" fill="#2f9ee8" /><path d="M3 2L14 7.5L3 14Z" fill="#f5b324" /><path d="M3 22L14 16.5L8 10Z" fill="#78c23c" /></svg>
      </TaskIcon>
      <TaskIcon>
        <svg width="23" height="23" viewBox="0 0 23 23"><rect width="23" height="23" fill="#1279d6" /><path d="M4 7H14V16H4Z" fill="none" stroke="#fff" strokeWidth="1.4" /><path d="M8 9.5V13.5L11 11.5Z" fill="#fff" /><path d="M16 10L20 7V16L16 13Z" fill="#fff" /></svg>
      </TaskIcon>
      <TaskIcon className="border-b-2 border-[#8fb6d8]">
        <div className="w-[23px] h-[23px] flex">
          <div className="w-[13px] bg-[#d2482a] text-[14px] font-bold text-white leading-[23px] text-center font-['Liberation_Sans',sans-serif]">P</div>
          <div className="flex-1 my-[2px] bg-[#f4e9e4] border-r-2 border-[#d2482a]" />
        </div>
      </TaskIcon>
      <TaskIcon className="bg-[#3a3a3a] border-b-2 border-[#8fb6d8]"><KKLogo className="w-[24px] h-[24px]" /></TaskIcon>

      <div className="ml-auto flex items-center h-full shrink-0">
        <div className={tray}><LuChevronUp className="w-[18px] h-[18px]" /></div>
        <div className={tray}><div className="w-[16px] h-[16px] rounded-full bg-[#d4c52e] text-[#1d6e2a] text-[14px] font-black leading-[15px] text-center">+</div></div>
        <div className={tray}><div className="w-[15px] h-[10px] border border-white flex p-px"><div className="w-[10px] bg-white" /></div></div>
        <div className={tray}><svg width="14" height="14" viewBox="0 0 14 14" fill="none" stroke="#ccc"><path d="M1 13A12 12 0 0 1 13 1M4 13A9 9 0 0 1 13 4M7 13A6 6 0 0 1 13 7" /><circle cx="11" cy="12" r="1.5" fill="#fff" stroke="none" /></svg></div>
        <div className={`${tray} text-[13px]`}>中</div>
        <div className="w-[32px] flex items-center justify-center shrink-0"><div className="w-[16px] h-[16px] rounded-[2px] bg-[#e0502a] -rotate-6 text-white text-[13px] font-black leading-[16px] text-center font-['Liberation_Sans',sans-serif]">S</div></div>
        <div className="w-[76px] flex flex-col items-center text-[12px] leading-[19px] shrink-0 font-['Noto_Sans',sans-serif]"><span>21:51</span><span>2020/12/7</span></div>
        <div className="w-[42px] flex items-center justify-center relative shrink-0">
          <svg width="17" height="17" viewBox="0 0 17 17" className="-mt-[3px]"><path d="M0 1H17V12H7L4 15V12H0Z" fill="#fff" /><path d="M3 4H14M3 7H14" stroke="#555" /></svg>
          <div className="absolute left-[20px] top-[8px] w-[15px] h-[15px] rounded-full bg-[#333] border border-[#888] text-[11px] font-bold leading-[13px] text-center">2</div>
        </div>
        <div className="w-[10px]" />
      </div>
    </div>
  );
}

export default function App() {
  return (
    <div className="relative w-[1366px] h-[768px] overflow-hidden flex flex-col blur-[0.35px] font-['Noto_Sans_CJK_SC','Liberation_Sans',sans-serif]">
      <Wallpaper />
      <div className="relative flex-1 min-h-0">
        <DesktopIcons />
        <TopWidgets />
        <PowerPointWindow />
        <KKWindow />
      </div>
      <Taskbar />
    </div>
  );
}
